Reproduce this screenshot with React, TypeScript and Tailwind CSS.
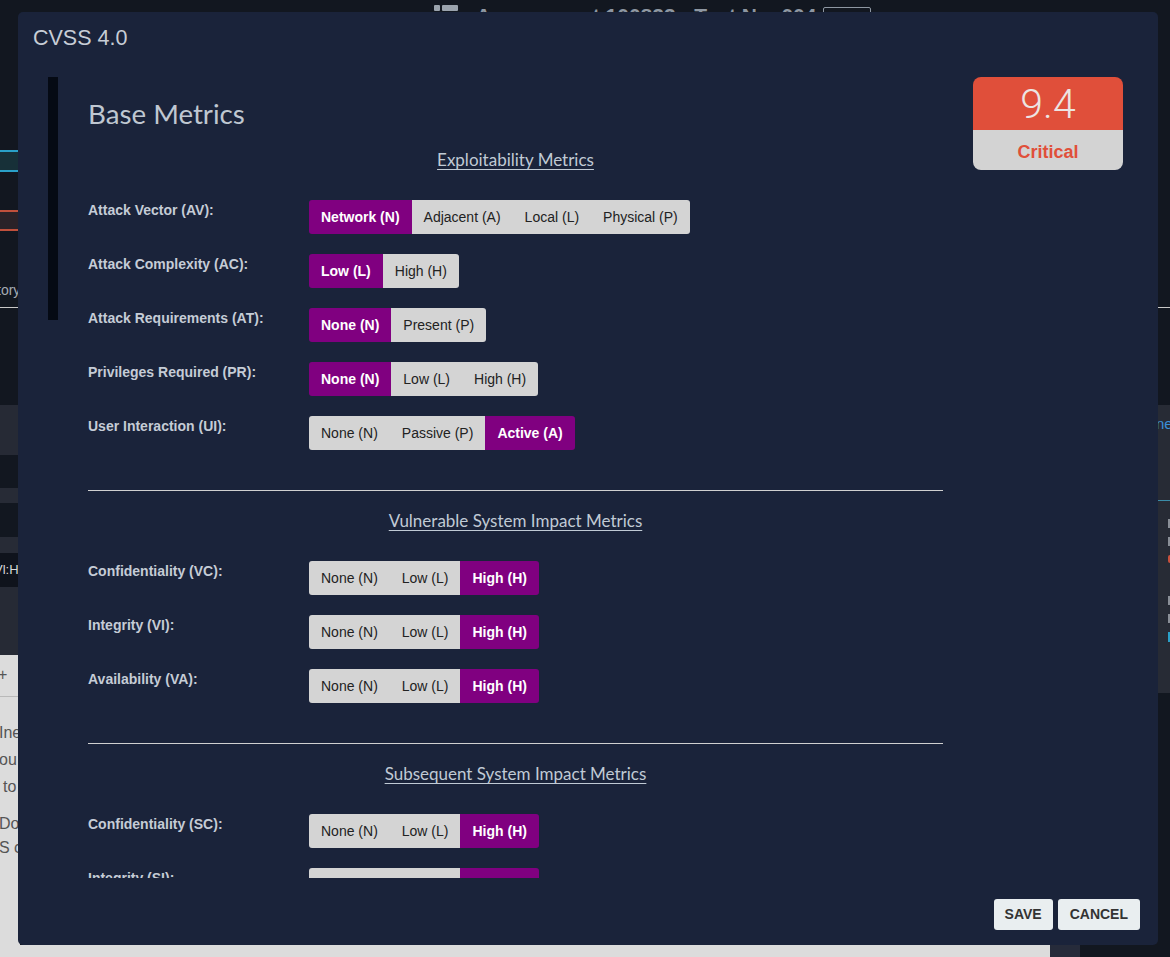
import React from "react";

type Metric = {
  label: string;
  options: string[];
  selected: number;
};

const exploitability: Metric[] = [
  { label: "Attack Vector (AV):", options: ["Network (N)", "Adjacent (A)", "Local (L)", "Physical (P)"], selected: 0 },
  { label: "Attack Complexity (AC):", options: ["Low (L)", "High (H)"], selected: 0 },
  { label: "Attack Requirements (AT):", options: ["None (N)", "Present (P)"], selected: 0 },
  { label: "Privileges Required (PR):", options: ["None (N)", "Low (L)", "High (H)"], selected: 0 },
  { label: "User Interaction (UI):", options: ["None (N)", "Passive (P)", "Active (A)"], selected: 2 },
];

const vulnerable: Metric[] = [
  { label: "Confidentiality (VC):", options: ["None (N)", "Low (L)", "High (H)"], selected: 2 },
  { label: "Integrity (VI):", options: ["None (N)", "Low (L)", "High (H)"], selected: 2 },
  { label: "Availability (VA):", options: ["None (N)", "Low (L)", "High (H)"], selected: 2 },
];

const subsequent: Metric[] = [
  { label: "Confidentiality (SC):", options: ["None (N)", "Low (L)", "High (H)"], selected: 2 },
  { label: "Integrity (SI):", options: ["None (N)", "Low (L)", "High (H)"], selected: 2 },
  { label: "Availability (SA):", options: ["None (N)", "Low (L)", "High (H)"], selected: 2 },
];

function MetricRow({ metric }: { metric: Metric }) {
  return (
    <div className="flex items-start">
      <div className="w-[221px] shrink-0 text-[14px] font-bold leading-[20px] text-[#c5ccd6]">
        {metric.label}
      </div>
      <div className="flex h-[34px] overflow-hidden rounded-[3px]">
        {metric.options.map((opt, i) => (
          <button
            key={opt}
            className={
              i === metric.selected
                ? "flex items-center bg-[#800080] px-[12px] text-[14px] font-bold text-white"
                : "flex items-center bg-[#d4d4d4] px-[12px] text-[14px] text-[#222]"
            }
          >
            {opt}
          </button>
        ))}
      </div>
    </div>
  );
}

function MetricGroup({ title, metrics }: { title: string; metrics: Metric[] }) {
  return (
    <div className="flex flex-col">
      <div className="text-center font-['Lato','Noto_Sans',sans-serif] text-[17px] leading-[24px] text-[#c0cad5] underline underline-offset-[3px]">
        {title}
      </div>
      <div className="mt-[28px] flex flex-col gap-[20px]">
        {metrics.map((m) => (
          <MetricRow key={m.label} metric={m} />
        ))}
      </div>
    </div>
  );
}

// page behind the dialog, mostly hidden by it
function LeftEdge() {
  return (
    <div className="flex w-[20px] shrink-0 flex-col overflow-hidden text-nowrap">
      <div className="h-[150px]" />
      <div className="h-[22px] border-y-2 border-[#2aa0c8] bg-[#173038]" />
      <div className="h-[38px]" />
      <div className="h-[21px] border-y-2 border-[#c0503c] bg-[#2a2228]" />
      <div className="h-[49px]" />
      <div className="-ml-[3px] h-[27px] text-[14px] leading-[20px] text-[#a5abb3]">tory</div>
      <div className="h-px bg-[#c8c8c8]" />
      <div className="h-[97px]" />
      <div className="h-[50px] bg-[#262a35]" />
      <div className="h-[33px]" />
      <div className="h-[15px] bg-[#272b36]" />
      <div className="h-[34px]" />
      <div className="h-[16px] bg-[#272b36]" />
      <div className="-ml-[6px] flex h-[34px] items-center bg-[#0f131c] text-[13px] text-[#d8d8d8]">Vl:H</div>
      <div className="h-[68px] bg-[#262a35]" />
      <div className="flex flex-1 flex-col bg-[#dcdcdc] text-[16px] text-[#555]">
        <div className="-ml-[2px] h-[42px] border-b border-[#b9b9b9] pt-[10px] leading-[20px]">+</div>
        <div className="-ml-[1px] mt-[22px] flex flex-col leading-[27px]">
          <span>Ine</span>
          <span>ou</span>
          <span className="pl-[4px]">to</span>
          <span className="mt-[10px]">Do</span>
          <span className="-mt-[3px]">S c</span>
        </div>
      </div>
    </div>
  );
}

function RightEdge() {
  return (
    <div className="flex w-[20px] shrink-0 flex-col overflow-hidden text-nowrap">
      <div className="h-[307px]" />
      <div className="h-px bg-[#c8c8c8]" />
      <div className="h-[97px]" />
      <div className="flex h-[288px] flex-col bg-[#272b35] pl-[6px]">
        <div className="mt-[8px] h-[88px] border-b border-[#3b8ca8] text-[15px] text-[#3a8fd8]">ne</div>
        <div className="mt-[18px] flex flex-col gap-[9px] pl-[12px]">
          <div className="h-[9px] w-[4px] bg-[#8a8f97]" />
          <div className="h-[9px] w-[4px] bg-[#8a8f97]" />
          <div className="h-[8px] w-[4px] rounded-full bg-[#c8503c]" />
          <div className="mt-[24px] h-[9px] w-[4px] bg-[#8a8f97]" />
          <div className="h-[9px] w-[4px] bg-[#8a8f97]" />
          <div className="h-[10px] w-[4px] bg-[#2aa0c8]" />
        </div>
      </div>
    </div>
  );
}

function CenterBehind() {
  return (
    <div className="flex flex-1 flex-col overflow-hidden">
      <div className="flex items-start gap-[2px] pl-[414px] pt-[5px] text-nowrap">
        <div className="h-[6px] w-[6px] rounded-[1px] bg-[#9aa3ad]" />
        <div className="h-[6px] w-[16px] rounded-[1px] bg-[#9aa3ad]" />
        <div className="ml-[16px] text-[21px] font-bold leading-none text-[#8e97a2]">
          Assessment 100823 - Test No. 004
        </div>
        <div className="ml-[5px] mt-[2px] h-[20px] w-[48px] rounded-[2px] border border-[#8e97a2]" />
      </div>
      <div className="flex-1" />
      <div className="flex h-[12px]">
        <div className="w-[1030px] bg-[#dcdcdc]" />
        <div className="w-[30px] bg-[#262b3a]" />
      </div>
    </div>
  );
}

export default function App() {
  return (
    <div className="relative flex h-[957px] w-[1170px] overflow-hidden bg-[#121720] font-['Liberation_Sans',Arial,sans-serif]">
      <LeftEdge />
      <CenterBehind />
      <RightEdge />

      {/* Dialog */}
      <div className="absolute left-[18px] top-[12px] flex h-[933px] w-[1140px] flex-col rounded-[5px] bg-[#1a233a]">
        <div className="h-[65px] shrink-0 px-[15px] pt-[14px] text-[21.5px] leading-[24px] text-[#c7cdd6]">
          CVSS 4.0
        </div>

        <div className="flex h-[801px] shrink-0 overflow-hidden pl-[30px]">
          {/* scrollbar */}
          <div className="h-[243px] w-[10px] shrink-0 bg-[#050a14]" />

          <div className="ml-[30px] flex gap-[30px]">
            <div className="flex w-[855px] shrink-0 flex-col">
              <h2 className="mt-[20px] font-['Lato','Noto_Sans',sans-serif] text-[27.7px] leading-[34px] text-[#bfc7d1]">
                Base Metrics
              </h2>

              <div className="mt-[17px]">
                <MetricGroup title="Exploitability Metrics" metrics={exploitability} />
              </div>

              <div className="mt-[40px] h-px shrink-0 bg-[#d0d0d0]" />

              <div className="mt-[18px]">
                <MetricGroup title="Vulnerable System Impact Metrics" metrics={vulnerable} />
              </div>

              <div className="mt-[40px] h-px shrink-0 bg-[#d0d0d0]" />

              <div className="mt-[18px]">
                <MetricGroup title="Subsequent System Impact Metrics" metrics={subsequent} />
              </div>
            </div>

            {/* score */}
            <div className="h-[93px] w-[150px] shrink-0 overflow-hidden rounded-[8px]">
              <div className="flex h-[53px] items-center justify-center bg-[#e04f3a] pt-[2px] font-['Roboto',sans-serif] text-[41px] font-light text-[#ece4e2]">
                9.4
              </div>
              <div className="flex h-[40px] items-center justify-center bg-[#d3d3d3] pt-[5px] text-[18px] font-bold text-[#e04f3a]">
                Critical
              </div>
            </div>
          </div>
        </div>

        <div className="mt-[21px] flex justify-end gap-[5px] pr-[18px]">
          <button className="h-[31px] rounded-[3px] bg-[#e9eef0] px-[11px] text-[14px] font-bold text-[#333]">
            SAVE
          </button>
          <button className="h-[31px] rounded-[3px] bg-[#e9eef0] px-[12px] text-[14px] font-bold text-[#333]">
            CANCEL
          </button>
        </div>
      </div>
    </div>
  );
}
